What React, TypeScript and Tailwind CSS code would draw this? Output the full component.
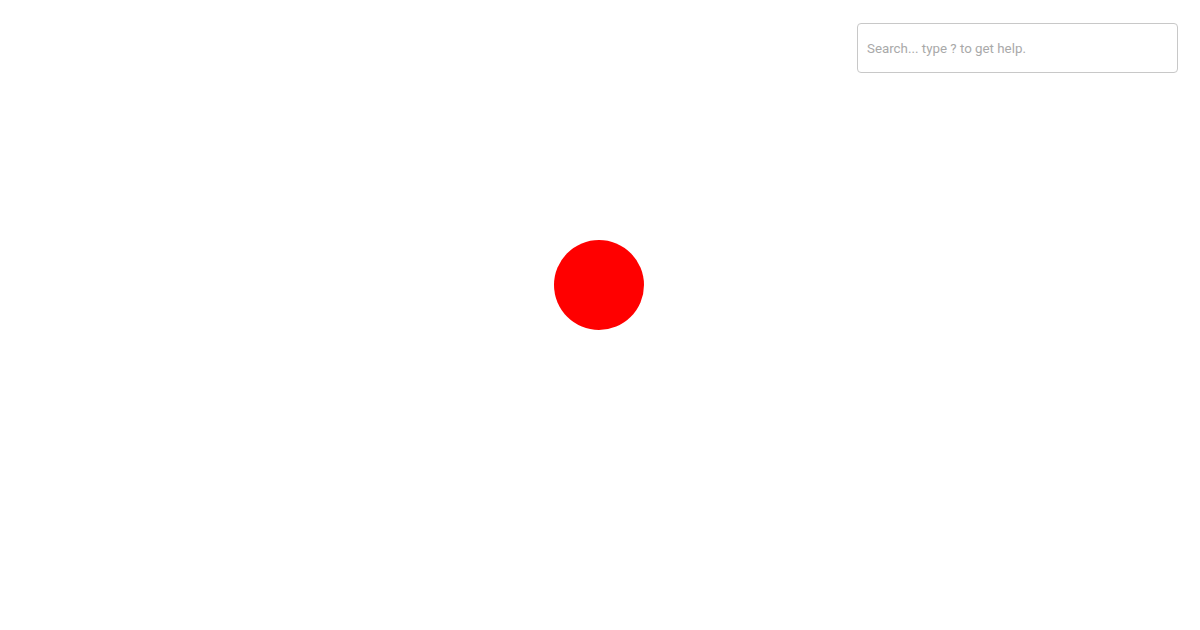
export default function App() {
  return (
    <div className="relative h-[630px] w-[1200px] overflow-hidden bg-white font-['Roboto','Liberation_Sans',sans-serif]">
      {/* map-like canvas with a single marker */}
      <div className="flex h-full w-full items-start pl-[554px] pt-[240px]">
        <div className="size-[90px] rounded-full bg-[#ff0000]" />
      </div>

      {/* search overlay */}
      <div className="absolute right-[22px] top-[23px] w-[321px]">
        <input
          type="text"
          placeholder="Search... type ? to get help."
          className="h-[50px] w-full rounded-[4px] border border-[#c8c8c8] bg-white px-[9px] text-[13.333px] text-[#333] outline-none placeholder:text-[#a9a9a9]"
        />
      </div>
    </div>
  );
}
